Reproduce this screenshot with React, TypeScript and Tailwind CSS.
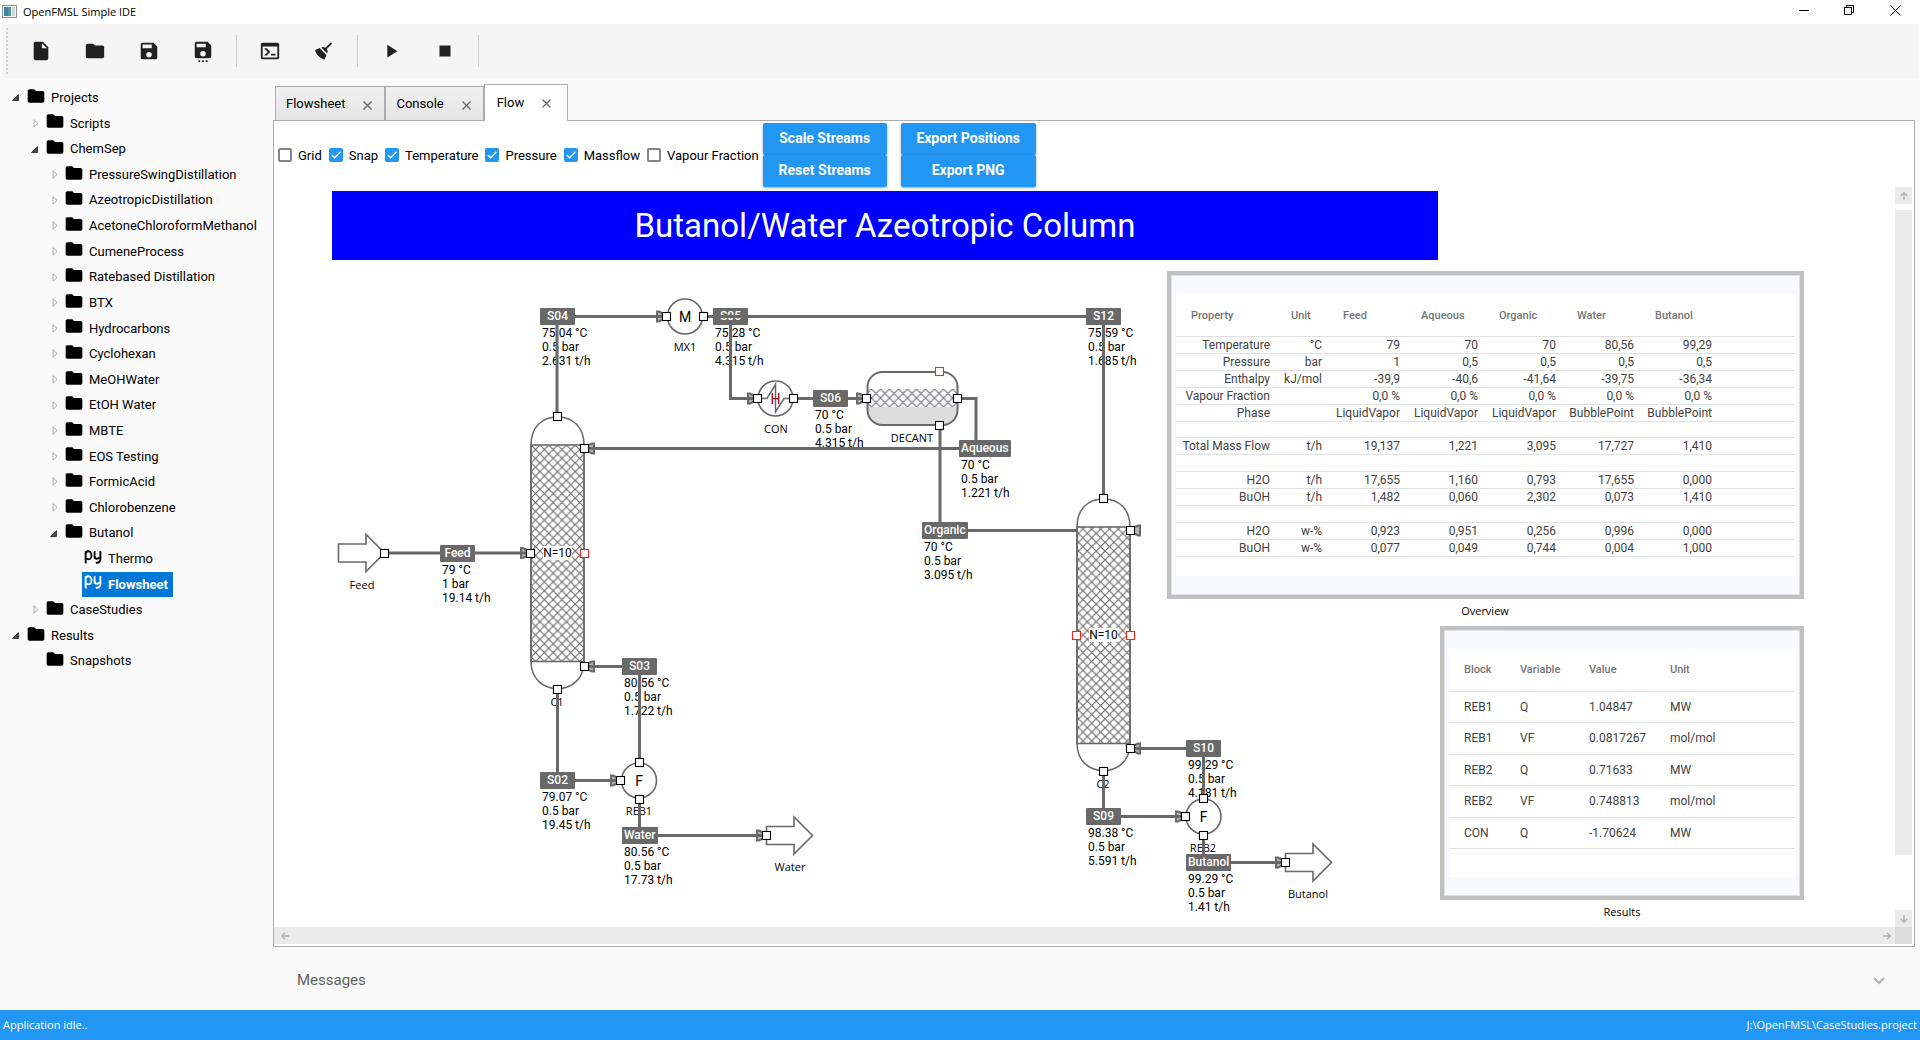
import React from "react";

const LINE = "#696969";

/* World coordinate shown at the top-left corner of the flowsheet viewport. */
const ORIGIN = { x: 274, y: 187 };
const place = (x: number, y: number) => ({ left: x - ORIGIN.x, top: y - ORIGIN.y });

const PATHS = {
  file: "M13,9V3.5L18.5,9M6,2C4.89,2 4,2.89 4,4V20A2,2 0 0,0 6,22H18A2,2 0 0,0 20,20V8L14,2H6Z",
  folder:
    "M10,4H4C2.89,4 2,4.89 2,6V18A2,2 0 0,0 4,20H20A2,2 0 0,0 22,18V8C22,6.89 21.1,6 20,6H12L10,4Z",
  save: "M15,9H5V5H15M12,19A3,3 0 0,1 9,16A3,3 0 0,1 12,13A3,3 0 0,1 15,16A3,3 0 0,1 12,19M17,3H5C3.89,3 3,3.9 3,5V19A2,2 0 0,0 5,21H19A2,2 0 0,0 21,19V7L17,3Z",
  saveAs:
    "M15,8V4H5V8H15M12,18A3,3 0 0,0 15,15A3,3 0 0,0 12,12A3,3 0 0,0 9,15A3,3 0 0,0 12,18M17,2L21,6V18A2,2 0 0,1 19,20H5C3.89,20 3,19.1 3,18V4A2,2 0 0,1 5,2H17M11,22H13V24H11V22M7,22H9V24H7V22M15,22H17V24H15V22Z",
  console:
    "M20,19V7H4V19H20M20,3A2,2 0 0,1 22,5V19A2,2 0 0,1 20,21H4A2,2 0 0,1 2,19V5C2,3.89 2.9,3 4,3H20M13,17V15H18V17H13M9.58,13L5.57,9H8.4L11.7,12.3C12.09,12.69 12.09,13.33 11.7,13.72L8.42,17H5.59L9.58,13Z",
  broom:
    "M19.36,2.72L20.78,4.14L15.06,9.85C16.13,11.39 16.28,13.24 15.38,14.44L9.06,8.12C10.26,7.22 12.11,7.37 13.65,8.44L19.36,2.72M5.93,17.57C3.92,15.56 2.69,13.16 2.35,10.92L7.23,8.83L14.67,16.27L12.58,21.15C10.34,20.81 7.94,19.58 5.93,17.57Z",
  play: "M8,5.14V19.14L19,12.14L8,5.14Z",
  stop: "M18,18H6V6H18V18Z",
  python:
    "M2,5.69C8.92,1.07 11.1,7 11.28,10.27C11.46,13.53 8.29,17.64 4.31,14.92V20.3L2,18.77V5.69M4.22,7.4V12.78C7.84,14.95 9.08,13.17 9.08,10.09C9.08,5.74 6.57,5.59 4.22,7.4M15.08,4.15C15.08,4.15 14.9,7.64 15.08,11.07C15.44,14.5 19.69,11.84 19.69,11.84V4.92L22,5.2V14.44C22,20.6 15.85,20.3 15.85,20.3L15.08,18C20.46,18 19.78,14.43 19.78,14.43C13.27,16.97 12.77,12.61 12.77,12.61V5.69L15.08,4.15Z",
};

function Icon({ d, className }: { d: string; className: string }) {
  return (
    <svg viewBox="0 0 24 24" className={className} fill="currentColor" aria-hidden="true">
      <path d={d} />
    </svg>
  );
}

function TitleBar() {
  return (
    <header className="flex h-6 shrink-0 items-start bg-white pr-0.5 pl-0.5">
      <svg viewBox="0 0 15 13" className="mt-[5px] h-[13px] w-[15px]" aria-hidden="true">
        <rect x="0.5" y="0.5" width="14" height="12" fill="#f4f6f8" stroke="#8d959c" />
        <rect x="2" y="2" width="7" height="9" fill="#4f9a94" />
        <rect x="2" y="2" width="4" height="9" fill="#3d7fa8" />
        <rect x="10" y="2" width="3" height="9" fill="#cfd6db" />
      </svg>
      <h1 className="ml-1.5 flex-1 font-['Open_Sans'] text-[11px] leading-[23px] text-black">OpenFMSL Simple IDE</h1>
      <div className="flex">
        <button type="button" aria-label="Minimize" className="flex h-5 w-[45px] items-center justify-center">
          <svg viewBox="0 0 11 11" className="h-[11px] w-[11px]" stroke="#000">
            <path d="M0 5.5H10" />
          </svg>
        </button>
        <button type="button" aria-label="Restore" className="flex h-5 w-[45px] items-center justify-center">
          <svg viewBox="0 0 11 11" className="h-[11px] w-[11px]" stroke="#000" fill="none">
            <path d="M0.5 2.5H7.5V9.5H0.5ZM2.5 2.5V0.5H9.5V7.5H7.5" />
          </svg>
        </button>
        <button type="button" aria-label="Close" className="flex h-5 w-[46px] items-center justify-center">
          <svg viewBox="0 0 11 11" className="h-[11px] w-[11px]" stroke="#000">
            <path d="M0.5 0.5L10.5 10.5M10.5 0.5L0.5 10.5" />
          </svg>
        </button>
      </div>
    </header>
  );
}

function ToolButton({ label, d }: { label: string; d: string }) {
  return (
    <button type="button" aria-label={label} className="flex h-11 w-[54px] items-center justify-center text-[#212121]">
      <Icon d={d} className="h-[22px] w-[22px]" />
    </button>
  );
}

function ToolBar() {
  const rule = <span className="h-8 w-px bg-[#d0d0d0]" />;
  return (
    <div className="mr-px ml-[3px] flex h-[54px] shrink-0 items-center bg-[#f5f5f5] pl-[3px]">
      <span className="h-[46px] w-0 border-l-2 border-dotted border-[#cfcfcf]" />
      <div className="ml-1.5 flex">
        <ToolButton label="New" d={PATHS.file} />
        <ToolButton label="Open" d={PATHS.folder} />
        <ToolButton label="Save" d={PATHS.save} />
        <ToolButton label="Save as" d={PATHS.saveAs} />
      </div>
      <span className="w-1.5" />
      {rule}
      <span className="w-1.5" />
      <ToolButton label="Console" d={PATHS.console} />
      <ToolButton label="Clear" d={PATHS.broom} />
      <span className="w-1.5" />
      {rule}
      <span className="w-1.5" />
      <ToolButton label="Run" d={PATHS.play} />
      <ToolButton label="Stop" d={PATHS.stop} />
      <span className="w-1.5" />
      {rule}
    </div>
  );
}

type Item = { name: string; level: 0 | 1 | 2 | 3; state: "open" | "closed" | "leaf"; py?: boolean; selected?: boolean };

const TREE: Item[] = [
  { name: "Projects", level: 0, state: "open" },
  { name: "Scripts", level: 1, state: "closed" },
  { name: "ChemSep", level: 1, state: "open" },
  { name: "PressureSwingDistillation", level: 2, state: "closed" },
  { name: "AzeotropicDistillation", level: 2, state: "closed" },
  { name: "AcetoneChloroformMethanol", level: 2, state: "closed" },
  { name: "CumeneProcess", level: 2, state: "closed" },
  { name: "Ratebased Distillation", level: 2, state: "closed" },
  { name: "BTX", level: 2, state: "closed" },
  { name: "Hydrocarbons", level: 2, state: "closed" },
  { name: "Cyclohexan", level: 2, state: "closed" },
  { name: "MeOHWater", level: 2, state: "closed" },
  { name: "EtOH Water", level: 2, state: "closed" },
  { name: "MBTE", level: 2, state: "closed" },
  { name: "EOS Testing", level: 2, state: "closed" },
  { name: "FormicAcid", level: 2, state: "closed" },
  { name: "Chlorobenzene", level: 2, state: "closed" },
  { name: "Butanol", level: 2, state: "open" },
  { name: "Thermo", level: 3, state: "leaf", py: true },
  { name: "Flowsheet", level: 3, state: "leaf", py: true, selected: true },
  { name: "CaseStudies", level: 1, state: "closed" },
  { name: "Results", level: 0, state: "open" },
  { name: "Snapshots", level: 1, state: "leaf" },
];

const INDENT = ["pl-[10px]", "pl-[29px]", "pl-[48px]", "pl-[67px]"];

function Tree() {
  return (
    <aside className="w-[273px] shrink-0 pt-[7px]">
      <ul className="flex h-[589px] flex-col text-[13px] text-black">
        {TREE.map((n) => (
          <li key={n.name + n.level} className={`flex flex-1 items-stretch ${INDENT[n.level]}`}>
            <span className="flex w-[15px] items-center pl-0.5">
              {n.state === "open" && (
                <svg viewBox="0 0 7 7" className="h-[7px] w-[7px]" aria-hidden="true">
                  <path d="M6.5 0.5V6.5H0.5Z" fill="#4a4a4a" stroke="#262626" strokeWidth="0.8" />
                </svg>
              )}
              {n.state === "closed" && (
                <svg viewBox="0 0 7 9" className="ml-0.5 h-[9px] w-[7px]" aria-hidden="true">
                  <path d="M1 0.8L5 4.5L1 8.2Z" fill="#fff" stroke="#a0a0a0" strokeWidth="0.9" />
                </svg>
              )}
            </span>
            <button
              type="button"
              className={`flex items-center gap-[5px] whitespace-nowrap pl-px ${
                n.selected ? "bg-[#0078d7] pr-[5px] font-bold text-white" : ""
              }`}
            >
              <Icon d={n.py ? PATHS.python : PATHS.folder} className="mb-1 h-5 w-5" />
              {n.name}
            </button>
          </li>
        ))}
      </ul>
    </aside>
  );
}

function CloseX() {
  return (
    <svg viewBox="0 0 9 9" className="h-[9px] w-[9px]" stroke="#6b6b6b" strokeWidth="1.4" aria-hidden="true">
      <path d="M0.5 0.5L8.5 8.5M8.5 0.5L0.5 8.5" />
    </svg>
  );
}

function Tabs() {
  return (
    <nav className="ml-0.5 flex items-end text-[13px] text-black">
      {["Flowsheet", "Console"].map((t) => (
        <div
          key={t}
          className="flex h-[34px] items-center border border-b-0 border-[#acacac] bg-gradient-to-b from-[#f0f0f0] to-[#e5e5e5] pr-3 pl-2.5"
        >
          <button type="button">{t}</button>
          <button type="button" aria-label={`Close ${t}`} className="mt-1 ml-[18px]">
            <CloseX />
          </button>
        </div>
      ))}
      <div className="relative z-10 -mb-px flex h-[37px] items-center border border-b-0 border-[#acacac] bg-white pr-4 pb-px pl-3">
        <button type="button">Flow</button>
        <button type="button" aria-label="Close Flow" className="mt-0.5 ml-[18px]">
          <CloseX />
        </button>
      </div>
    </nav>
  );
}

function Check({ label, on }: { label: string; on?: boolean }) {
  return (
    <label className="flex items-center gap-1.5">
      <span className="relative -mt-0.5 h-3.5 w-3.5">
        <input
          type="checkbox"
          defaultChecked={on}
          className="block h-3.5 w-3.5 appearance-none rounded-[2px] border-2 border-[#858585] bg-white checked:border-[#2196f3] checked:bg-[#2196f3]"
        />
        {on && (
          <svg viewBox="0 0 14 14" className="pointer-events-none absolute inset-0 h-3.5 w-3.5" fill="none" stroke="#fff">
            <path d="M2.8 7L5.6 9.8L11.4 3.8" strokeWidth="1.4" />
          </svg>
        )}
      </span>
      {label}
    </label>
  );
}

function Blue({ children }: { children: React.ReactNode }) {
  return (
    <button
      type="button"
      className="h-8 rounded-[2px] bg-[#2196f3] text-[14px] font-bold whitespace-nowrap text-white shadow-[0_1px_3px_rgba(0,0,0,0.35)]"
    >
      {children}
    </button>
  );
}

function Options() {
  return (
    <div className="flex h-[66px] shrink-0 items-center pl-1 text-[13px] text-black">
      <div className="mt-1 flex items-center gap-[7px]">
        <Check label="Grid" />
        <Check label="Snap" on />
        <Check label="Temperature" on />
        <Check label="Pressure" on />
        <Check label="Massflow" on />
        <Check label="Vapour Fraction" />
      </div>
      <div className="mt-px ml-1 flex w-[124px] flex-col">
        <Blue>Scale Streams</Blue>
        <Blue>Reset Streams</Blue>
      </div>
      <div className="mt-px ml-3.5 flex w-[135px] flex-col">
        <Blue>Export Positions</Blue>
        <Blue>Export PNG</Blue>
      </div>
    </div>
  );
}

const STREAMS: { name: string; x: number; y: number; values: string[] }[] = [
  { name: "S04", x: 540, y: 308, values: ["75.04 °C", "0.5 bar", "2.631 t/h"] },
  { name: "S05", x: 713, y: 308, values: ["75.28 °C", "0.5 bar", "4.315 t/h"] },
  { name: "S12", x: 1086, y: 308, values: ["75.59 °C", "0.5 bar", "1.685 t/h"] },
  { name: "S06", x: 813, y: 390, values: ["70 °C", "0.5 bar", "4.315 t/h"] },
  { name: "Aqueous", x: 959, y: 440, values: ["70 °C", "0.5 bar", "1.221 t/h"] },
  { name: "Organic", x: 922, y: 522, values: ["70 °C", "0.5 bar", "3.095 t/h"] },
  { name: "Feed", x: 440, y: 545, values: ["79 °C", "1 bar", "19.14 t/h"] },
  { name: "S03", x: 622, y: 658, values: ["80.56 °C", "0.5 bar", "1.722 t/h"] },
  { name: "S02", x: 540, y: 772, values: ["79.07 °C", "0.5 bar", "19.45 t/h"] },
  { name: "Water", x: 622, y: 827, values: ["80.56 °C", "0.5 bar", "17.73 t/h"] },
  { name: "S10", x: 1186, y: 740, values: ["99.29 °C", "0.5 bar", "4.181 t/h"] },
  { name: "S09", x: 1086, y: 808, values: ["98.38 °C", "0.5 bar", "5.591 t/h"] },
  { name: "Butanol", x: 1186, y: 854, values: ["99.29 °C", "0.5 bar", "1.41 t/h"] },
];

const CAPTIONS: [string, number, number][] = [
  ["MX1", 685, 347],
  ["CON", 776, 429],
  ["DECANT", 912, 438],
  ["Feed", 362, 585],
  ["C1", 557, 702],
  ["REB1", 639, 811],
  ["Water", 790, 867],
  ["C2", 1103, 784],
  ["REB2", 1203, 848],
  ["Butanol", 1308, 894],
  ["Overview", 1485, 611],
  ["Results", 1622, 912],
];

function Stream({ s }: { s: (typeof STREAMS)[number] }) {
  return (
    <div className="absolute text-[12px] leading-[14px] whitespace-nowrap text-black" style={place(s.x, s.y)}>
      <span className="flex h-[17px] w-fit min-w-[35px] items-center justify-center rounded-[1px] bg-[#696969] px-0.5 pb-0.5 font-medium text-white">
        {s.name}
      </span>
      <div className="pt-px pl-0.5">
        {s.values.map((v) => (
          <div key={v}>{v}</div>
        ))}
      </div>
    </div>
  );
}

/* Closed wedge behind a port; it opens against the direction of flow. */
function Wedge({ x, y, flip }: { x: number; y: number; flip?: boolean }) {
  const s = flip ? -1 : 1;
  return (
    <path
      d={`M${x + s} ${y - 3}L${x - 3 * s} ${y - 5}H${x - 5 * s}V${y + 5}H${x - 3 * s}L${x + s} ${y + 3}Z`}
      fill="#b5b5b5"
      stroke={LINE}
      strokeWidth="2"
    />
  );
}

function Port({ x, y, open }: { x: number; y: number; open?: boolean }) {
  return (
    <rect x={x - 4} y={y - 4} width="8" height="8" fill="#fff" stroke={open ? "#ff2020" : "#000"} strokeWidth="1.1" />
  );
}

function Column({ x, y }: { x: number; y: number }) {
  return (
    <g stroke={LINE} strokeWidth="2">
      <path
        d={`M${x} ${y + 28}C${x} ${y + 10} ${x + 11} ${y} ${x + 26.5} ${y}S${x + 53} ${y + 10} ${x + 53} ${y + 28}V${y + 244}C${x + 53} ${y + 261} ${x + 42} ${y + 271.5} ${x + 26.5} ${y + 271.5}S${x} ${y + 261} ${x} ${y + 244}Z`}
        fill="#fff"
        strokeWidth="1.5"
      />
      <rect x={x} y={y + 28} width="53" height="216.5" fill="url(#packing)" strokeWidth="1.6" />
      <rect x={x + 12} y={y + 129} width="29" height="14" fill="#fff" stroke="none" />
      <text x={x + 26.5} y={y + 140} textAnchor="middle" fontSize="12" fill="#000" stroke="none">
        N=10
      </text>
    </g>
  );
}

function Vessel({ x, y, letter }: { x: number; y: number; letter: string }) {
  return (
    <g>
      <circle cx={x} cy={y} r="17.5" fill="#fff" stroke={LINE} strokeWidth="1.6" />
      <text x={x} y={y + 5} textAnchor="middle" fontSize="14" fill="#000">
        {letter}
      </text>
    </g>
  );
}

function FlowArrow({ x, y }: { x: number; y: number }) {
  return (
    <path
      d={`M${x} ${y - 9}h27.5v-9.5l18.5 18.5l-18.5 18.5v-9.5h-27.5Z`}
      fill="#fff"
      stroke={LINE}
      strokeWidth="1.6"
    />
  );
}

function Diagram() {
  return (
    <svg
      viewBox={`${ORIGIN.x} ${ORIGIN.y} 1620 740`}
      className="pointer-events-none absolute top-0 left-0 h-[740px] w-[1620px] font-['Roboto']"
      aria-label="Process flow diagram"
    >
      <defs>
        <pattern id="packing" x="531" y="445" width="8.83" height="8.83" patternUnits="userSpaceOnUse">
          <path d="M-1 -1L10 10M10 -1L-1 10" stroke={LINE} strokeWidth="1.1" />
        </pattern>
        <pattern id="mesh" x="871.5" y="389" width="9" height="9" patternUnits="userSpaceOnUse">
          <path d="M-1 -1L10 10M10 -1L-1 10" stroke="#787878" strokeWidth="1.1" />
        </pattern>
        <clipPath id="drum">
          <rect x="867.5" y="372" width="90" height="53" rx="15" />
        </clipPath>
      </defs>

      <Wedge x={589} y={448.5} flip />
      <Wedge x={589} y={666.5} flip />
      <Wedge x={526} y={553} />
      <Wedge x={662} y={316.5} />
      <Wedge x={753} y={398.5} />
      <Wedge x={862} y={398.5} />
      <Wedge x={616} y={780.5} />
      <Wedge x={762} y={835.5} />
      <Wedge x={1135} y={530.5} flip />
      <Wedge x={1135} y={748.5} flip />
      <Wedge x={1181} y={816.5} />
      <Wedge x={1281} y={862.5} />

      <g fill="none" stroke={LINE} strokeWidth="3">
        <path d="M574 316.5H662M557 325V416M703 316.5H1086M730.5 325V398.5H753M1103.5 325V498" />
        <path d="M797 398.5H813M847 398.5H862M957 398.5H976V440M959 448.5H588M940 425V522M968 530.5H1078" />
        <path d="M384 553H440M474 553H526M622 666.5H588M639.5 675V762M557.5 689V772M574 780.5H616" />
        <path d="M639.5 799V827M657 835.5H762M1186 748.5H1134M1203.5 757V798M1103.5 771V808M1120 816.5H1181" />
        <path d="M1203.5 835V854M1231 862.5H1281" />
      </g>

      <Column x={531} y={417} />
      <Column x={1077} y={499} />
      <Vessel x={685} y={316.5} letter="M" />
      <Vessel x={639} y={780.5} letter="F" />
      <Vessel x={1203.5} y={816.5} letter="F" />

      <circle cx="775.5" cy="398.5" r="17.5" fill="#fff" stroke={LINE} strokeWidth="1.6" />
      <path d="M760 398.5H767L775.5 384.5V412L784 398.5H791" fill="none" stroke={LINE} strokeWidth="1.5" />
      <text x="775.5" y="403.5" textAnchor="middle" fontSize="14" fill="#8b0000">
        H
      </text>

      <g clipPath="url(#drum)">
        <rect x="867" y="371" width="91" height="18" fill="#fff" />
        <rect x="867" y="389" width="91" height="18" fill="#f8f8ff" />
        <rect x="867" y="389" width="91" height="18" fill="url(#mesh)" />
        <rect x="867" y="407" width="91" height="19" fill="#dcdcdc" />
      </g>
      <rect x="867.5" y="372" width="90" height="53" rx="15" fill="none" stroke={LINE} strokeWidth="2" />

      <FlowArrow x={338.5} y={553} />
      <FlowArrow x={766.5} y={835.5} />
      <FlowArrow x={1285.5} y={862.5} />

      <Port x={384.5} y={553.5} />
      <Port x={557.5} y={416.5} />
      <Port x={584.5} y={448.5} />
      <Port x={530.5} y={553.5} />
      <Port x={584.5} y={553.5} open />
      <Port x={584.5} y={666.5} />
      <Port x={557.5} y={689.5} />
      <Port x={666.5} y={316.5} />
      <Port x={703.5} y={316.5} />
      <Port x={757.5} y={398.5} />
      <Port x={793.5} y={398.5} />
      <Port x={866.5} y={398.5} />
      <Port x={957.5} y={398.5} />
      <Port x={939.5} y={371.5} open />
      <Port x={939.5} y={425.5} />
      <Port x={639.5} y={762.5} />
      <Port x={620.5} y={780.5} />
      <Port x={639.5} y={799.5} />
      <Port x={766.5} y={835.5} />
      <Port x={1103.5} y={498.5} />
      <Port x={1130.5} y={530.5} />
      <Port x={1076.5} y={635.5} open />
      <Port x={1130.5} y={635.5} open />
      <Port x={1130.5} y={748.5} />
      <Port x={1103.5} y={771.5} />
      <Port x={1203.5} y={798.5} />
      <Port x={1185.5} y={816.5} />
      <Port x={1203.5} y={835.5} />
      <Port x={1285.5} y={862.5} />
    </svg>
  );
}

const OVERVIEW: string[][] = [
  ["Temperature", "°C", "79", "70", "70", "80,56", "99,29"],
  ["Pressure", "bar", "1", "0,5", "0,5", "0,5", "0,5"],
  ["Enthalpy", "kJ/mol", "-39,9", "-40,6", "-41,64", "-39,75", "-36,34"],
  ["Vapour Fraction", "", "0,0 %", "0,0 %", "0,0 %", "0,0 %", "0,0 %"],
  ["Phase", "", "LiquidVapor", "LiquidVapor", "LiquidVapor", "BubblePoint", "BubblePoint"],
  [],
  ["Total Mass Flow", "t/h", "19,137", "1,221", "3,095", "17,727", "1,410"],
  [],
  ["H2O", "t/h", "17,655", "1,160", "0,793", "17,655", "0,000"],
  ["BuOH", "t/h", "1,482", "0,060", "2,302", "0,073", "1,410"],
  [],
  ["H2O", "w-%", "0,923", "0,951", "0,256", "0,996", "0,000"],
  ["BuOH", "w-%", "0,077", "0,049", "0,744", "0,004", "1,000"],
];

const RESULTS: string[][] = [
  ["REB1", "Q", "1.04847", "MW"],
  ["REB1", "VF", "0.0817267", "mol/mol"],
  ["REB2", "Q", "0.71633", "MW"],
  ["REB2", "VF", "0.748813", "mol/mol"],
  ["CON", "Q", "-1.70624", "MW"],
];

function Overview() {
  return (
    <div
      className="absolute w-[637px] border-4 border-[#c0c0c0] bg-[#f8f8ff] px-[5px] pt-[19px] pb-[19px] shadow-[inset_0_0_0_1px_#e0e0e8]"
      style={place(1167, 271)}
    >
      <div className="bg-white pb-[19px]">
        <table className="w-full table-fixed border-collapse text-[12px] leading-4 text-[#424242]">
          <colgroup>
            <col className="w-[100px]" />
            <col className="w-[52px]" />
            <col className="w-[78px]" />
            <col className="w-[78px]" />
            <col className="w-[78px]" />
            <col className="w-[78px]" />
            <col className="w-[78px]" />
            <col />
          </colgroup>
          <thead>
            <tr className="h-[42px] border-b border-[#e0e0e0] text-left text-[11px] text-[#757575]">
              {["Property", "Unit", "Feed", "Aqueous", "Organic", "Water", "Butanol"].map((h) => (
                <th key={h} className="p-0 pt-0.5 pl-[15px] font-medium">
                  {h}
                </th>
              ))}
              <td />
            </tr>
          </thead>
          <tbody>
            {OVERVIEW.map((r, i) => (
              <tr
                key={i}
                className={`border-b border-[#e0e0e0] text-right ${i === 5 ? "h-4" : "h-[17px]"}`}
              >
                {r.length === 0 ? (
                  <td colSpan={8} className="p-0" />
                ) : (
                  <>
                    {r.map((c, j) => (
                      <td key={j} className="p-0 pr-1.5 whitespace-nowrap">
                        {c}
                      </td>
                    ))}
                    <td className="p-0" />
                  </>
                )}
              </tr>
            ))}
          </tbody>
        </table>
      </div>
    </div>
  );
}

function Results() {
  return (
    <div
      className="absolute w-[364px] border-4 border-[#c0c0c0] bg-[#f8f8ff] px-[5px] pt-[19px] pb-[19px] shadow-[inset_0_0_0_1px_#e0e0e8]"
      style={place(1440, 626)}
    >
      <div className="bg-white pb-7">
        <table className="w-full table-fixed border-collapse text-left text-[12px] text-[#424242]">
          <colgroup>
            <col className="w-[56px]" />
            <col className="w-[69px]" />
            <col className="w-[81px]" />
            <col />
          </colgroup>
          <thead>
            <tr className="h-[42px] border-b border-[#e0e0e0] text-[11px] text-[#757575]">
              {["Block", "Variable", "Value", "Unit"].map((h) => (
                <th key={h} className="p-0 pl-[15px] font-medium">
                  {h}
                </th>
              ))}
            </tr>
          </thead>
          <tbody>
            {RESULTS.map((r, i) => (
              <tr key={i} className="h-[31px] border-b border-[#e0e0e0] even:h-8">
                {r.map((c, j) => (
                  <td key={j} className="p-0 pl-[15px]">
                    {c}
                  </td>
                ))}
              </tr>
            ))}
          </tbody>
        </table>
      </div>
    </div>
  );
}

function Arrow({ className }: { className: string }) {
  return (
    <svg viewBox="0 0 8 8" className={`h-2 w-2 ${className}`} fill="none" stroke="#b4b4b4" strokeWidth="1.4">
      <path d="M4 0V7M0.8 4L4 7.2L7.2 4" />
    </svg>
  );
}

function Canvas() {
  return (
    <div className="grid min-h-0 flex-1 grid-cols-[1fr_17px] grid-rows-[1fr_17px] pr-0.5 pb-0.5">
      <div className="relative overflow-hidden">
        <div
          className="absolute flex h-[69px] w-[1106px] items-center justify-center bg-[#0000ff] text-[33px] text-white"
          style={place(332, 191)}
        >
          Butanol/Water Azeotropic Column
        </div>
        {CAPTIONS.map(([t, x, y]) => (
          <span
            key={t + x}
            className="absolute -translate-x-1/2 -translate-y-1/2 font-['Open_Sans'] text-[11px] leading-4 text-black"
            style={place(x, y)}
          >
            {t}
          </span>
        ))}
        {STREAMS.map((s) => (
          <Stream key={s.name} s={s} />
        ))}
        <Diagram />
        <Overview />
        <Results />
      </div>
      <div className="flex flex-col">
        <span className="flex h-[17px] items-center justify-center bg-[#ebebeb]">
          <Arrow className="rotate-180" />
        </span>
        <span className="mt-1.5 mb-[55px] flex-1 bg-[#ebebeb]" />
        <span className="flex h-[17px] items-center justify-center bg-[#ebebeb]">
          <Arrow className="" />
        </span>
      </div>
      <div className="flex items-center justify-between bg-[#ebebeb] pr-1 pl-[7px]">
        <Arrow className="rotate-90" />
        <Arrow className="-rotate-90" />
      </div>
      <div className="bg-[#dcdcdc]" />
    </div>
  );
}

export default function App() {
  return (
    <div className="flex h-screen flex-col overflow-hidden bg-[#fafafa] font-['Roboto',sans-serif]">
      <TitleBar />
      <ToolBar />
      <div className="flex min-h-0 flex-1">
        <Tree />
        <main className="flex min-w-0 flex-1 flex-col pt-1.5 pr-[5px]">
          <Tabs />
          <section className="flex min-h-0 flex-1 flex-col border border-[#acacac] bg-white">
            <Options />
            <Canvas />
          </section>
          <button type="button" className="flex h-[63px] shrink-0 items-center justify-between pt-1 pr-[30px] pl-6">
            <span className="text-[15px] text-[#616161]">Messages</span>
            <svg viewBox="0 0 12 8" className="h-2 w-3" fill="none" stroke="#b0b0b0" strokeWidth="2">
              <path d="M1 1L6 6L11 1" />
            </svg>
          </button>
        </main>
      </div>
      <footer className="flex h-[30px] shrink-0 items-center justify-between bg-[#2196f3] px-[3px] font-['Open_Sans'] text-[11px] text-white">
        <span>Application idle..</span>
        <span>J:\OpenFMSL\CaseStudies.project</span>
      </footer>
    </div>
  );
}
